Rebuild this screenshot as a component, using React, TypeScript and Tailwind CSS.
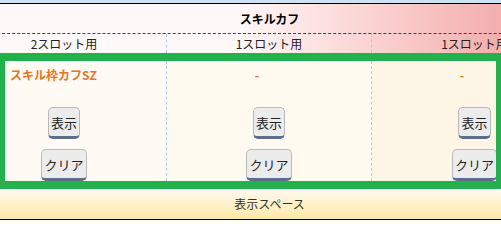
const cells = [
  { slot: "2スロット用", title: "スキル枠カフSZ", bg: "bg-[#fffaf4]" },
  { slot: "1スロット用", title: "-", bg: "bg-[#fffaf0]" },
  { slot: "1スロット用", title: "-", bg: "bg-[#fdf6e7]" },
];

function Btn({ label }: { label: string }) {
  return (
    <button className="h-[32px] rounded-[5px] border border-[#b9b9b9] border-b-[3px] border-b-[#5d6d8d] bg-[#ececec] px-[2px] text-[13px] leading-[27px] text-[#222]">
      {label}
    </button>
  );
}

export default function App() {
  return (
    <div className="h-[231px] w-[501px] overflow-hidden bg-white font-['Noto_Sans_CJK_JP','Noto_Sans',sans-serif] text-[12px] text-[#222]">
      <div className="h-[3px] bg-[#cfe2f3]" />

      {/* table head, scrolled left */}
      <div className="overflow-hidden border-t border-black">
        <div className="ml-[-38px] w-[615px] bg-gradient-to-r from-[#fff8f8] from-45% to-[#ee9898]">
          <div className="flex h-[30px] items-center justify-center border-b border-dashed border-[#444] font-bold text-black">
            スキルカフ
          </div>
          <div className="grid h-[19px] grid-cols-3">
            {cells.map((c, i) => (
              <div
                key={i}
                className={`flex items-center justify-center whitespace-nowrap leading-none ${
                  i < 2 ? "border-r border-dashed border-[#a8cdf0]" : ""
                }`}
              >
                {c.slot}
              </div>
            ))}
          </div>
        </div>
      </div>

      {/* highlighted row */}
      <div className="overflow-hidden border-x-[5px] border-y-[8px] border-[#22b14c]">
        <div className="ml-[-43px] grid h-[120px] w-[615px] grid-cols-3">
          {cells.map((c, i) => (
            <div
              key={i}
              className={`flex flex-col items-center pt-[3px] ${c.bg} ${
                i < 2 ? "border-r border-dashed border-[#a8cdf0]" : ""
              }`}
            >
              <div className="ml-[48px] h-[22px] w-[84px] self-start whitespace-nowrap text-center font-bold leading-[22px] text-[#e8731f]">
                {c.title}
              </div>
              <div className="mt-[21px]">
                <Btn label="表示" />
              </div>
              <div className="mt-[10px]">
                <Btn label="クリア" />
              </div>
            </div>
          ))}
        </div>
      </div>

      <div className="flex h-[31px] items-center justify-center border-b border-black bg-gradient-to-b from-[#fffaf0] to-[#ffe8a6] pl-[38px] text-[#333]">
        表示スペース
      </div>
    </div>
  );
}
